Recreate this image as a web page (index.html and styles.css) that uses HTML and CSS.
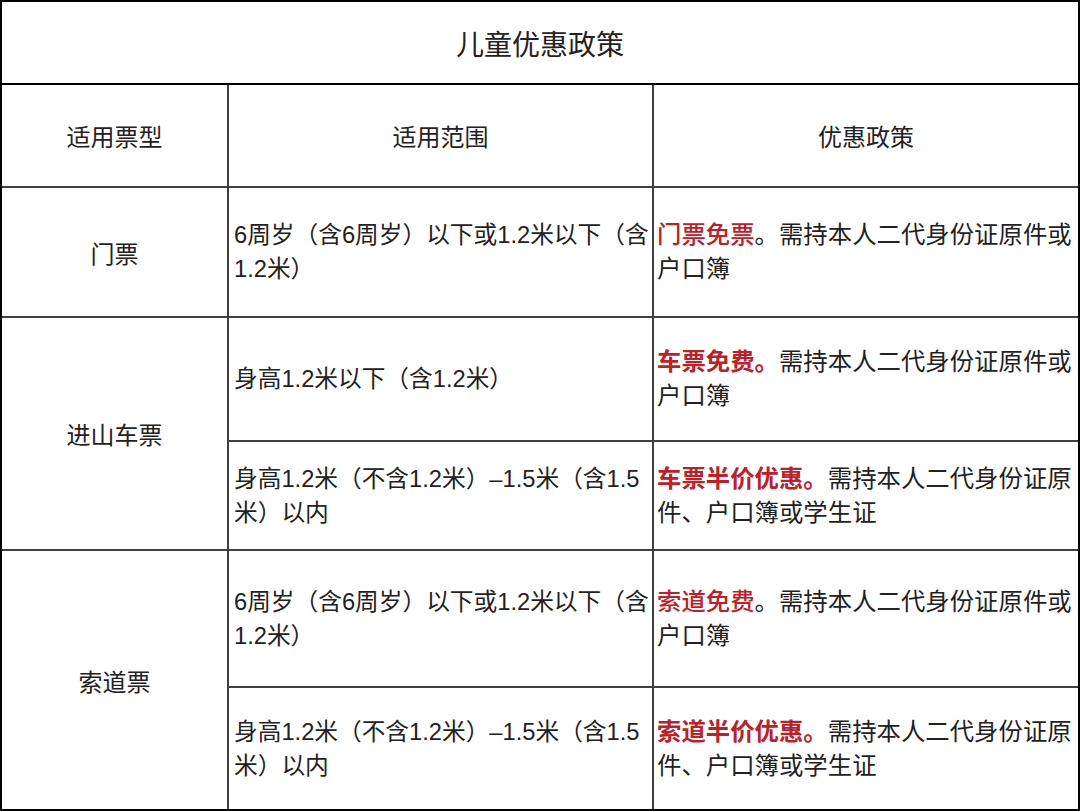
FILE: index.html
```html
<!DOCTYPE html>
<html lang="zh-CN">
<head>
<meta charset="utf-8">
<title>儿童优惠政策</title>
<link rel="stylesheet" href="styles.css">
</head>
<body>
<div class="table">
  <div class="cell title">儿童优惠政策</div>

  <div class="cell head c1">适用票型</div>
  <div class="cell head c2">适用范围</div>
  <div class="cell head c3">优惠政策</div>

  <div class="cell label c1 r-men">门票</div>
  <div class="cell text c2"><p class="inner">6周岁（含6周岁）以下或1.2米以下（含1.2米）</p></div>
  <div class="cell text c3"><p class="inner"><span class="red mid">门票免票</span>。需持本人二代身份证原件或户口簿</p></div>

  <div class="cell label c1 r-che">进山车票</div>
  <div class="cell text c2"><p class="inner">身高1.2米以下（含1.2米）</p></div>
  <div class="cell text c3"><p class="inner"><span class="red">车票免费。</span>需持本人二代身份证原件或户口簿</p></div>
  <div class="cell text c2"><p class="inner">身高1.2米（不含1.2米）–1.5米（含1.5米）以内</p></div>
  <div class="cell text c3"><p class="inner"><span class="red">车票半价优惠。</span>需持本人二代身份证原件、户口簿或学生证</p></div>

  <div class="cell label c1 r-suo">索道票</div>
  <div class="cell text c2"><p class="inner">6周岁（含6周岁）以下或1.2米以下（含1.2米）</p></div>
  <div class="cell text c3"><p class="inner"><span class="red mid">索道免费</span>。需持本人二代身份证原件或户口簿</p></div>
  <div class="cell text c2 last"><p class="inner">身高1.2米（不含1.2米）–1.5米（含1.5米）以内</p></div>
  <div class="cell text c3 last"><p class="inner"><span class="red">索道半价优惠。</span>需持本人二代身份证原件、户口簿或学生证</p></div>
</div>
</body>
</html>
```

FILE: styles.css
```css
* {
  box-sizing: border-box;
}

html, body {
  margin: 0;
  padding: 0;
  background: #ffffff;
}

body {
  font-family: "Liberation Sans", "Noto Sans CJK SC", sans-serif;
  color: #222222;
  text-spacing-trim: space-all;
}

.table {
  display: grid;
  width: 1080px;
  height: 811px;
  border: 2px solid #000000;
  grid-template-columns: 227px 425px 1fr;
  grid-template-rows: 83px 103px 130px 124px 109px 137px 1fr;
}

.cell {
  display: flex;
  align-items: center;
  border-right: 2px solid #404040;
  border-bottom: 2px solid #404040;
}

.c3 {
  border-right: none;
}

.last {
  border-bottom: none;
}

.title {
  grid-column: 1 / 4;
  justify-content: center;
  font-size: 28px;
  border-right: none;
  border-bottom-color: #000000;
}

.head {
  justify-content: center;
  font-size: 24px;
}

.label {
  justify-content: center;
  font-size: 24px;
}

.r-men {
  grid-row: 3 / 4;
}

.r-che {
  grid-row: 4 / 6;
}

.r-suo {
  grid-row: 6 / 8;
  border-bottom: none;
}

.text {
  line-height: 34px;
  padding-left: 5px;
}

.text.c2 {
  font-size: 23.7px;
}

.text.c3 {
  font-size: 24.4px;
  padding-left: 3px;
}

.inner {
  margin: 0;
  width: 100%;
}

.red {
  color: #bd2029;
  font-weight: 700;
}

.red.mid {
  font-weight: 500;
}
```
